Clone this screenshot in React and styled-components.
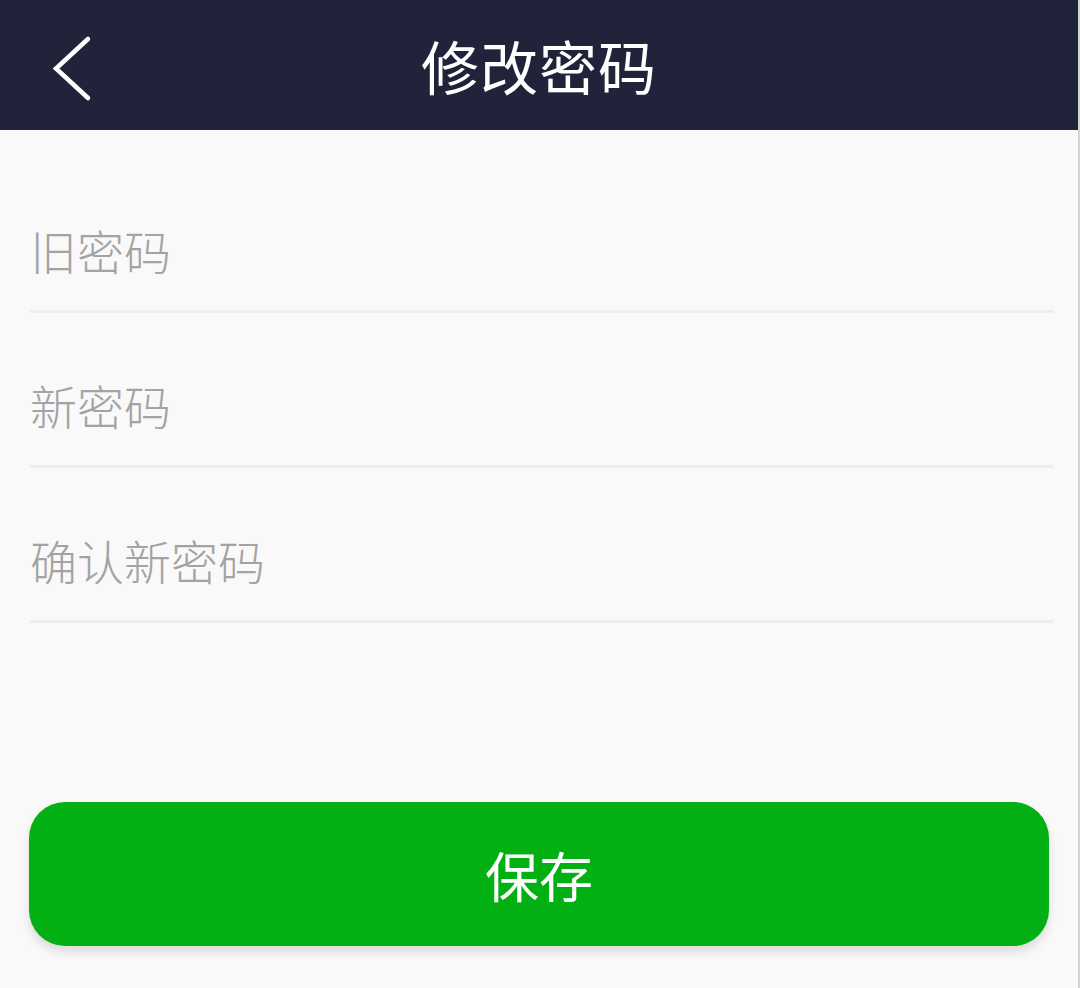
import React from 'react';
import styled, { createGlobalStyle } from 'styled-components';

const GlobalStyle = createGlobalStyle`
  * { box-sizing: border-box; }
  body {
    margin: 0;
    background: #f9f9f9;
    font-family: "Noto Sans CJK SC", "Noto Sans", sans-serif;
  }
`;

const fields = ['旧密码', '新密码', '确认新密码'];

const ChangePassword = () => {
  return (
    <>
      <GlobalStyle />
      <Page>
        <Header>
          <BackButton aria-label="back">
            <svg width="44" height="70" viewBox="0 0 44 70">
              <path
                d="M38 7 L6 36.5 L38 66"
                fill="none"
                stroke="#fff"
                strokeWidth="4.5"
                strokeLinecap="round"
                strokeLinejoin="miter"
              />
            </svg>
          </BackButton>
          <Title>修改密码</Title>
        </Header>
        <Form>
          {fields.map((f) => (
            <Row key={f}>
              <Input type="password" placeholder={f} />
            </Row>
          ))}
        </Form>
        <SaveButton>保存</SaveButton>
      </Page>
    </>
  );
};

export default ChangePassword;

const Page = styled.div`
  width: 1080px;
  height: 988px;
  background: #f9f9f9;
  border-right: 2px solid #d4d4d4;
  display: flex;
  flex-direction: column;
`;

const Header = styled.div`
  height: 130px;
  background: #20233a;
  display: flex;
  align-items: center;
  justify-content: center;
  position: relative;
`;

const BackButton = styled.button`
  position: absolute;
  left: 50px;
  top: 32px;
  padding: 0;
  border: none;
  background: none;
  display: flex;
`;

const Title = styled.h1`
  margin: 0;
  color: #fff;
  font-size: 58px;
  font-weight: 400;
  letter-spacing: 1px;
  line-height: 1;
`;

const Form = styled.div`
  padding: 28px 24px 0 30px;
  display: flex;
  flex-direction: column;
`;

const Row = styled.div`
  height: 155px;
  border-bottom: 3px solid #eeeeee;
  display: flex;
  align-items: flex-end;
  padding-bottom: 33px;
`;

const Input = styled.input`
  width: 100%;
  border: none;
  outline: none;
  background: transparent;
  padding: 0;
  font-family: inherit;
  font-size: 47px;
  font-weight: 300;
  line-height: 54px;
  height: 54px;
  color: #333;
  &::placeholder {
    color: #a3a3a3;
  }
`;

const SaveButton = styled.button`
  margin: 179px 29px 0 29px;
  height: 144px;
  border: none;
  border-radius: 36px;
  background: #03b013;
  color: #fff;
  font-family: inherit;
  font-size: 54px;
  box-shadow: 0 6px 10px rgba(0, 0, 0, 0.12);
  padding: 0;
`;
